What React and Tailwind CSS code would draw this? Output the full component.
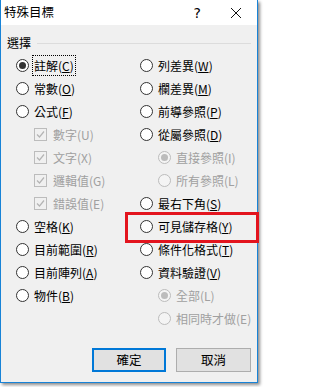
import React from "react";

const Radio = ({ checked, disabled }) => (
  <span
    className={
      "relative flex items-center justify-center w-[13px] h-[13px] rounded-full border shrink-0 " +
      (disabled ? "border-[#bcbcbc] bg-[#f4f4f4]" : "border-[#333333] bg-white")
    }
  >
    {checked && (
      <span
        className={
          "w-[7px] h-[7px] rounded-full " + (disabled ? "bg-[#bcbcbc]" : "bg-[#333333]")
        }
      />
    )}
  </span>
);

const Check = () => (
  <span className="flex items-center justify-center w-[13px] h-[13px] border border-[#bcbcbc] bg-[#f0f0f0] shrink-0">
    <svg width="11" height="11" viewBox="0 0 11 11">
      <polyline points="2,5.5 4.5,8 9,2.5" fill="none" stroke="#b4b4b4" strokeWidth="1.2" />
    </svg>
  </span>
);

const Label = ({ text, k, disabled, focus }) => (
  <span
    className={
      "leading-[14px] whitespace-nowrap " +
      (disabled ? "text-[#a0a0a0] " : "text-black ") +
      (focus ? "outline outline-1 outline-dotted outline-black outline-offset-[1px]" : "")
    }
  >
    {text}(
    {disabled ? k : <span className="underline underline-offset-[1px]">{k}</span>})
  </span>
);

const Item = ({ type, text, k, checked, disabled, focus, indent }) => (
  <div className={"flex items-center h-[23px] " + (indent ? "pl-[18px]" : "")}>
    {type === "check" ? <Check /> : <Radio checked={checked} disabled={disabled} />}
    <span className={type === "check" ? "ml-[6px]" : "ml-[5px]"}>
      <Label text={text} k={k} disabled={disabled} focus={focus} />
    </span>
  </div>
);

export default function App() {
  const left = [
    { text: "註解", k: "C", checked: true, focus: true },
    { text: "常數", k: "O" },
    { text: "公式", k: "F" },
    { type: "check", text: "數字", k: "U", disabled: true, indent: true },
    { type: "check", text: "文字", k: "X", disabled: true, indent: true },
    { type: "check", text: "邏輯值", k: "G", disabled: true, indent: true },
    { type: "check", text: "錯誤值", k: "E", disabled: true, indent: true },
    { text: "空格", k: "K" },
    { text: "目前範圍", k: "R" },
    { text: "目前陣列", k: "A" },
    { text: "物件", k: "B" },
  ];
  const right = [
    { text: "列差異", k: "W" },
    { text: "欄差異", k: "M" },
    { text: "前導參照", k: "P" },
    { text: "從屬參照", k: "D" },
    { text: "直接參照", k: "I", disabled: true, checked: true, indent: true },
    { text: "所有參照", k: "L", disabled: true, indent: true },
    { text: "最右下角", k: "S" },
    { text: "可見儲存格", k: "Y" },
    { text: "條件化格式", k: "T" },
    { text: "資料驗證", k: "V" },
    { text: "全部", k: "L", disabled: true, checked: true, indent: true },
    { text: "相同時才做", k: "E", disabled: true, indent: true },
  ];

  return (
    <div className="relative w-[262px] h-[387px] bg-white font-['Noto_Sans_CJK_TC','Noto_Sans_CJK_SC',sans-serif] text-[12px]">
      <div className="w-[258px] h-[383px] flex flex-col bg-[#f0f0f0] border-x border-b border-[#1883d7] shadow-[2px_2px_3px_rgba(0,0,0,0.45)]">
        <div className="h-[25px] bg-white flex items-center pl-[3px] shrink-0">
          <span className="text-[12.5px] leading-none text-black">特殊目標</span>
          <span className="ml-auto mr-[29px] text-[14px] leading-none font-['DejaVu_Sans',sans-serif] text-black">?</span>
          <svg width="12" height="12" viewBox="0 0 12 12" className="mr-[15px]">
            <path d="M1 1 L11 11 M11 1 L1 11" stroke="#111" strokeWidth="1" />
          </svg>
        </div>
        <div className="flex items-center h-[16px] mt-[10px] pl-[6px] pr-[6px]">
          <span className="leading-none text-black">選擇</span>
          <span className="flex-1 h-px bg-[#dcdcdc] ml-[6px]" />
        </div>
        <div className="flex mt-[3px] pl-[15px]">
          <div className="w-[124px] flex flex-col">
            {left.map((it, i) => (
              <Item key={i} {...it} />
            ))}
          </div>
          <div className="flex flex-col">
            {right.map((it, i) => (
              <Item key={i} {...it} />
            ))}
          </div>
        </div>
        <div className="flex justify-end gap-[10px] pr-[6px] mt-[18px]">
          <button className="w-[74px] h-[24px] border-2 border-[#0078d7] bg-[#e1e1e1] text-black text-[12.5px] leading-none">
            確定
          </button>
          <button className="w-[75px] h-[24px] border border-[#adadad] bg-[#e1e1e1] text-black text-[12.5px] leading-none">
            取消
          </button>
        </div>
      </div>
      <div className="absolute left-[125px] top-[212px] w-[134px] h-[31px] border-[3px] border-[#e3141e]" />
    </div>
  );
}
